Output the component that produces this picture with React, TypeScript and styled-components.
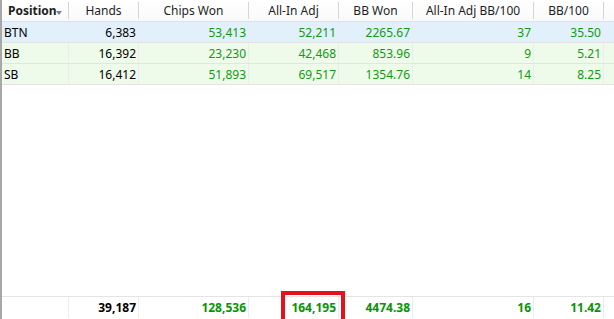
import React from 'react';
import styled, { createGlobalStyle } from 'styled-components';

type Align = 'left' | 'right' | 'center';

type Column = {
  key: string;
  title: string;
  width: string;
};

type Row = {
  position: string;
  values: string[];
  tone: 'blue' | 'green';
};

const columns: Column[] = [
  { key: 'position', title: 'Position', width: '67px' },
  { key: 'hands', title: 'Hands', width: '70px' },
  { key: 'chips', title: 'Chips Won', width: '110px' },
  { key: 'allin', title: 'All-In Adj', width: '90px' },
  { key: 'bbwon', title: 'BB Won', width: '74px' },
  { key: 'allinbb', title: 'All-In Adj BB/100', width: '121px' },
  { key: 'bb100', title: 'BB/100', width: '70px' },
];

const rows: Row[] = [
  { position: 'BTN', values: ['6,383', '53,413', '52,211', '2265.67', '37', '35.50'], tone: 'blue' },
  { position: 'BB', values: ['16,392', '23,230', '42,468', '853.96', '9', '5.21'], tone: 'green' },
  { position: 'SB', values: ['16,412', '51,893', '69,517', '1354.76', '14', '8.25'], tone: 'green' },
];

const totals = ['39,187', '128,536', '164,195', '4474.38', '16', '11.42'];

const template = columns.map((c) => c.width).join(' ') + ' 1fr';

const GlobalStyle = createGlobalStyle`
  html, body {
    margin: 0;
    padding: 0;
    background: #fff;
  }
  body {
    font-family: "Noto Sans", "Open Sans", sans-serif;
    font-size: 12px;
  }
`;

const Table = styled.div`
  display: flex;
  flex-direction: column;
  width: 614px;
  height: 319px;
  border-left: 2px solid #a8a8a8;
  box-sizing: border-box;
  overflow: hidden;
  background: #fff;
`;

const HeaderRow = styled.div`
  display: grid;
  grid-template-columns: ${template};
  height: 22px;
  background: linear-gradient(#ffffff, #f9f9f9);
  border-bottom: 1px solid #e2e2e2;
  box-sizing: border-box;
`;

const HeaderCell = styled.div<{ $first?: boolean }>`
  display: flex;
  align-items: center;
  justify-content: ${(p) => (p.$first ? 'flex-start' : 'center')};
  padding-left: ${(p) => (p.$first ? '6px' : '0')};
  border-right: 1px solid #d5d5d5;
  margin: 2px 0 3px;
  color: #1e1e1e;
  font-weight: ${(p) => (p.$first ? 700 : 400)};
  white-space: nowrap;
`;

const SortArrow = styled.span`
  width: 0;
  height: 0;
  margin: 4px 0 0 -1px;
  border-left: 3px solid transparent;
  border-right: 3px solid transparent;
  border-top: 4px solid #808080;
`;

const BodyRow = styled.div<{ $tone: 'blue' | 'green' }>`
  display: grid;
  grid-template-columns: ${template};
  height: 21px;
  background: ${(p) => (p.$tone === 'blue' ? '#e2f0fb' : '#effbea')};
  border-bottom: 1px solid #e4e4e4;
  box-sizing: border-box;
`;

const Cell = styled.div<{ $align?: Align; $green?: boolean; $bold?: boolean }>`
  position: relative;
  display: flex;
  align-items: center;
  justify-content: ${(p) => (p.$align === 'left' ? 'flex-start' : 'flex-end')};
  padding: ${(p) => (p.$align === 'left' ? '0 0 0 2px' : '0 2px 0 0')};
  border-right: 1px solid #ececec;
  color: ${(p) => (p.$green ? (p.$bold ? '#079407' : '#119a11') : '#000')};
  font-weight: ${(p) => (p.$bold ? 700 : 400)};
  white-space: nowrap;
`;

const Filler = styled.div`
  flex: 1;
`;

const FooterRow = styled.div`
  display: grid;
  grid-template-columns: ${template};
  height: 23px;
  border-top: 1px solid #e4e4e4;
  box-sizing: border-box;
  padding-bottom: 1px;
`;

const Highlight = styled.span`
  position: absolute;
  left: 32px;
  top: -6px;
  width: 64px;
  height: 34px;
  border: 4px solid #e3121b;
  box-sizing: border-box;
  pointer-events: none;
`;

export default function App() {
  return (
    <>
      <GlobalStyle />
      <Table>
        <HeaderRow>
          {columns.map((c, i) => (
            <HeaderCell key={c.key} $first={i === 0}>
              {c.title}
              {i === 0 && <SortArrow />}
            </HeaderCell>
          ))}
          <div />
        </HeaderRow>

        {rows.map((r) => (
          <BodyRow key={r.position} $tone={r.tone}>
            <Cell $align="left">{r.position}</Cell>
            {r.values.map((v, i) => (
              <Cell key={i} $green={i > 0}>
                {v}
              </Cell>
            ))}
            <div />
          </BodyRow>
        ))}

        <Filler />

        <FooterRow>
          <Cell $align="left" />
          {totals.map((v, i) => (
            <Cell key={i} $green={i > 0} $bold>
              {v}
              {i === 2 && <Highlight />}
            </Cell>
          ))}
          <div />
        </FooterRow>
      </Table>
    </>
  );
}
